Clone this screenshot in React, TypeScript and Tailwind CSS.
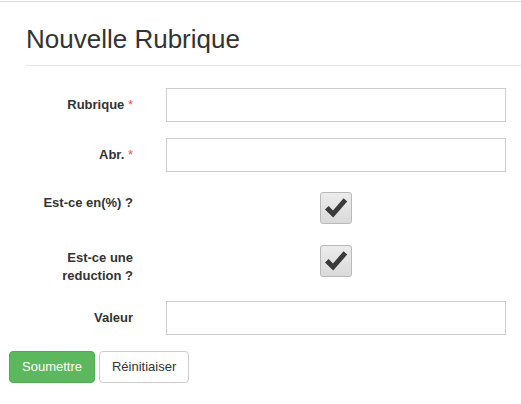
import { useState } from "react";

const CheckBox = ({ checked, onToggle }: { checked: boolean; onToggle: () => void }) => (
  <button
    type="button"
    onClick={onToggle}
    className="flex h-[32px] w-[32px] items-center justify-center rounded-[3px] border border-[#b9b9b9] bg-gradient-to-b from-[#ececec] to-[#dadada]"
  >
    {checked && (
      <svg width="24" height="22" viewBox="0 0 24 22">
        <path
          d="M1 12.5 L4.6 9 L9 13.4 L19.6 1.2 L23.2 4.6 L9.2 20.6 Z"
          fill="#3a3a3a"
        />
      </svg>
    )}
  </button>
);

const Label = ({ children, required }: { children: React.ReactNode; required?: boolean }) => (
  <label className="block w-[133px] shrink-0 text-right font-bold leading-[18px]">
    {children}
    {required && <span className="font-normal text-[#f0505a]"> *</span>}
  </label>
);

export default function App() {
  const [pct, setPct] = useState(true);
  const [reduc, setReduc] = useState(true);

  return (
    <div
      className="h-[404px] w-[521px] overflow-hidden bg-white pt-px text-[13px] text-[#333]"
      style={{ fontFamily: '"Liberation Sans", Arial, sans-serif' }}
    >
      <div className="border-t border-[#dddddd]">
        <div className="ml-[26px] border-b border-[#e5e5e5] pt-[22px] pb-[11px]">
          <h3 className="text-[26px] leading-[30px]">Nouvelle Rubrique</h3>
        </div>

        <div className="mt-[22px] flex items-center">
          <Label required>Rubrique</Label>
          <input className="ml-[33px] h-[34px] w-[340px] border border-[#cccccc] px-3 outline-none" />
        </div>

        <div className="mt-[16px] flex items-center">
          <Label required>Abr.</Label>
          <input className="ml-[33px] h-[34px] w-[340px] border border-[#cccccc] px-3 outline-none" />
        </div>

        <div className="mt-[20px] flex items-start">
          <div className="w-[133px] shrink-0 pt-[2px]">
            <Label>Est-ce en(%) ?</Label>
          </div>
          <div className="ml-[33px] flex w-[340px] justify-center">
            <CheckBox checked={pct} onToggle={() => setPct(!pct)} />
          </div>
        </div>

        <div className="mt-[21px] flex items-start">
          <div className="w-[133px] shrink-0 pt-[4px]">
            <Label>
              Est-ce une
              <br />
              reduction ?
            </Label>
          </div>
          <div className="ml-[33px] flex w-[340px] justify-center">
            <CheckBox checked={reduc} onToggle={() => setReduc(!reduc)} />
          </div>
        </div>

        <div className="mt-[16px] flex items-center">
          <Label>Valeur</Label>
          <input className="ml-[33px] h-[34px] w-[340px] border border-[#cccccc] px-3 outline-none" />
        </div>

        <div className="ml-[9px] mt-[16px] flex gap-[4px]">
          <button className="h-[32px] rounded-[4px] border border-[#4cae4c] bg-[#5cb85c] px-3 text-white">
            Soumettre
          </button>
          <button className="h-[32px] rounded-[4px] border border-[#cccccc] bg-white px-3 text-[#333]">
            Réinitiaiser
          </button>
        </div>
      </div>
    </div>
  );
}
